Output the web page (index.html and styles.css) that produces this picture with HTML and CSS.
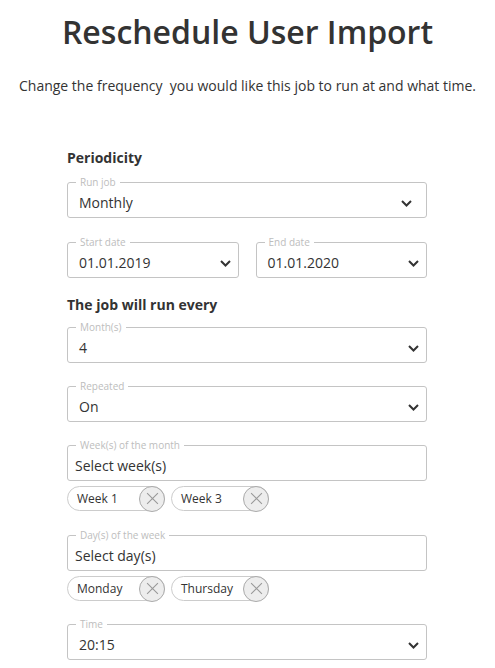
FILE: index.html
```html
<!DOCTYPE html>
<html lang="en">
<head>
<meta charset="utf-8">
<title>Reschedule User Import</title>
<link rel="stylesheet" href="styles.css">
</head>
<body>
<h1 class="title">Reschedule User Import</h1>
<p class="intro">Change the frequency&nbsp; you would like this job to run at and what time.</p>

<form class="form">
  <h2 class="section-title section-title--first">Periodicity</h2>

  <div class="field field--wide-chevron gap-24">
    <span class="field-label">Run job</span>
    <span class="field-value">Monthly</span>
    <svg class="chevron" viewBox="0 0 11 7"><path d="M1 1 L5.5 5.5 L10 1" /></svg>
  </div>

  <div class="row gap-17">
    <div class="field">
      <span class="field-label">Start date</span>
      <span class="field-value">01.01.2019</span>
      <svg class="chevron" viewBox="0 0 11 7"><path d="M1 1 L5.5 5.5 L10 1" /></svg>
    </div>
    <div class="field">
      <span class="field-label">End date</span>
      <span class="field-value">01.01.2020</span>
      <svg class="chevron" viewBox="0 0 11 7"><path d="M1 1 L5.5 5.5 L10 1" /></svg>
    </div>
  </div>

  <h2 class="section-title">The job will run every</h2>

  <div class="field gap-23">
    <span class="field-label">Month(s)</span>
    <span class="field-value">4</span>
    <svg class="chevron" viewBox="0 0 11 7"><path d="M1 1 L5.5 5.5 L10 1" /></svg>
  </div>

  <div class="field gap-23">
    <span class="field-label">Repeated</span>
    <span class="field-value">On</span>
    <svg class="chevron" viewBox="0 0 11 7"><path d="M1 1 L5.5 5.5 L10 1" /></svg>
  </div>

  <div class="field field--multi gap-5">
    <span class="field-label">Week(s) of the month</span>
    <span class="field-value">Select week(s)</span>
  </div>
  <div class="chips gap-24">
    <div class="chip"><span class="chip-text">Week 1</span><span class="chip-remove"><svg viewBox="0 0 12 12"><path d="M1 1 L11 11 M11 1 L1 11" /></svg></span></div>
    <div class="chip"><span class="chip-text">Week 3</span><span class="chip-remove"><svg viewBox="0 0 12 12"><path d="M1 1 L11 11 M11 1 L1 11" /></svg></span></div>
  </div>

  <div class="field field--multi gap-5">
    <span class="field-label">Day(s) of the week</span>
    <span class="field-value">Select day(s)</span>
  </div>
  <div class="chips gap-23">
    <div class="chip"><span class="chip-text">Monday</span><span class="chip-remove"><svg viewBox="0 0 12 12"><path d="M1 1 L11 11 M11 1 L1 11" /></svg></span></div>
    <div class="chip"><span class="chip-text">Thursday</span><span class="chip-remove"><svg viewBox="0 0 12 12"><path d="M1 1 L11 11 M11 1 L1 11" /></svg></span></div>
  </div>

  <div class="field">
    <span class="field-label">Time</span>
    <span class="field-value">20:15</span>
    <svg class="chevron" viewBox="0 0 11 7"><path d="M1 1 L5.5 5.5 L10 1" /></svg>
  </div>
</form>
</body>
</html>
```

FILE: styles.css
```css
html, body {
  margin: 0;
  padding: 0;
  background: #ffffff;
}

body {
  font-family: "Open Sans", "Liberation Sans", sans-serif;
  color: #333333;
}

.title {
  margin: 12px 0 0;
  font-size: 32px;
  line-height: 40px;
  font-weight: 600;
  text-align: center;
  color: #333333;
}

.intro {
  margin: 24px 0 0;
  font-size: 14px;
  line-height: 20px;
  text-align: center;
}

.form {
  width: 360px;
  margin: 52px 0 0 67px;
  display: flex;
  flex-direction: column;
}

.section-title {
  margin: 0 0 12px;
  font-size: 14px;
  line-height: 20px;
  font-weight: 700;
}

.section-title--first {
  margin-bottom: 14px;
}

.row {
  display: flex;
  gap: 17px;
}

.row .field {
  flex: 1;
}

.field {
  position: relative;
  box-sizing: border-box;
  height: 36px;
  border: 1px solid #c4c4c4;
  border-radius: 3px;
  padding: 10px 7px 0 11px;
  display: flex;
  align-items: flex-start;
}

.field--multi {
  padding-left: 7px;
}

.field--wide-chevron {
  padding-right: 14px;
}

.field-label {
  position: absolute;
  top: -7px;
  left: 8px;
  padding: 0 4px;
  background: #ffffff;
  font-size: 10px;
  line-height: 12px;
  color: #bdbdbd;
}

.field-value {
  flex: 1;
  font-size: 14px;
  line-height: 20px;
  color: #333333;
}

.chevron {
  width: 11px;
  height: 7px;
  margin-top: 7px;
  fill: none;
  stroke: #333333;
  stroke-width: 2;
}

.chips {
  display: flex;
  gap: 6px;
}

.chip {
  box-sizing: border-box;
  width: 98px;
  height: 25px;
  border: 1px solid #cccccc;
  border-radius: 13px;
  padding-left: 9px;
  display: flex;
  align-items: center;
}

.chip-text {
  font-size: 12px;
  line-height: 16px;
  color: #333333;
}

.chip-remove {
  box-sizing: border-box;
  margin-left: auto;
  margin-right: -1px;
  width: 26px;
  height: 26px;
  border: 1px solid #aaaaaa;
  border-radius: 50%;
  background: #ededed;
  display: flex;
  align-items: center;
  justify-content: center;
}

.chip-remove svg {
  width: 13px;
  height: 13px;
  fill: none;
  stroke: #999999;
  stroke-width: 1;
}

.gap-5 { margin-bottom: 5px; }
.gap-17 { margin-bottom: 17px; }
.gap-23 { margin-bottom: 23px; }
.gap-24 { margin-bottom: 24px; }
```
